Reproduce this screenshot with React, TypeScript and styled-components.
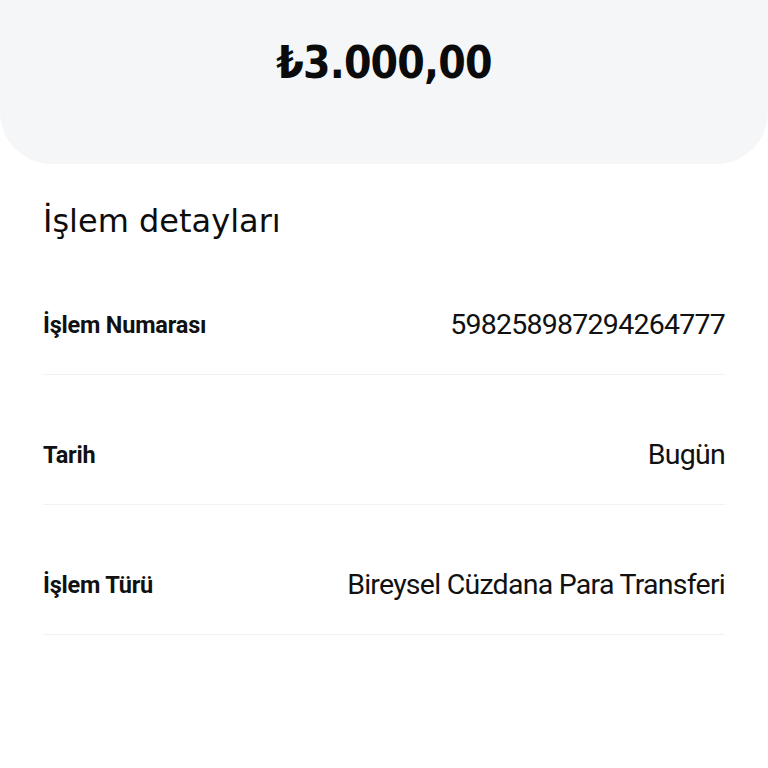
import * as React from 'react'
import styled, { createGlobalStyle } from 'styled-components'

const details = [
  { label: 'İşlem Numarası', value: '598258987294264777' },
  { label: 'Tarih', value: 'Bugün' },
  { label: 'İşlem Türü', value: 'Bireysel Cüzdana Para Transferi' },
]

const App = () => (
  <Page>
    <GlobalStyle />
    <Header>
      <Amount>₺3.000,00</Amount>
    </Header>
    <Section>
      <SectionTitle>İşlem detayları</SectionTitle>
      <List>
        {details.map(d => (
          <Row key={d.label}>
            <Label>{d.label}</Label>
            <Value>{d.value}</Value>
          </Row>
        ))}
      </List>
    </Section>
  </Page>
)

const GlobalStyle = createGlobalStyle`
  body {
    margin: 0;
    background: #ffffff;
    font-family: Roboto, "Liberation Sans", sans-serif;
    color: #111111;
  }
`

const Page = styled.main`
  width: 768px;
  min-height: 768px;
  display: flex;
  flex-direction: column;
`

const Header = styled.header`
  height: 164px;
  background: #f5f6f8;
  border-radius: 0 0 52px 52px;
  display: flex;
  justify-content: center;
  padding-top: 36px;
  box-sizing: border-box;
`

const Amount = styled.h1`
  margin: 0;
  font-family: "DejaVu Sans Condensed", "DejaVu Sans", sans-serif;
  font-weight: 700;
  font-size: 44px;
  line-height: 54px;
  letter-spacing: -0.8px;
  color: #0b0b0b;
`

const Section = styled.section`
  padding: 37px 43px 0 43px;
`

const SectionTitle = styled.h2`
  margin: 0;
  font-family: "DejaVu Sans", sans-serif;
  font-weight: 400;
  font-size: 32px;
  line-height: 40px;
  color: #0d0d0d;
`

const List = styled.div`
  display: flex;
  flex-direction: column;
  margin-top: 4px;
`

const Row = styled.div`
  display: flex;
  justify-content: space-between;
  align-items: center;
  height: 130px;
  padding: 64px 0 34px;
  box-sizing: border-box;
  line-height: 32px;
  border-bottom: 1px solid #f1f2f4;
`

const Label = styled.span`
  font-weight: 700;
  font-size: 23.5px;
  letter-spacing: -0.2px;
  color: #111111;
`

const Value = styled.span`
  font-weight: 400;
  font-size: 28.5px;
  letter-spacing: -0.75px;
  color: #111111;
`

export default App
